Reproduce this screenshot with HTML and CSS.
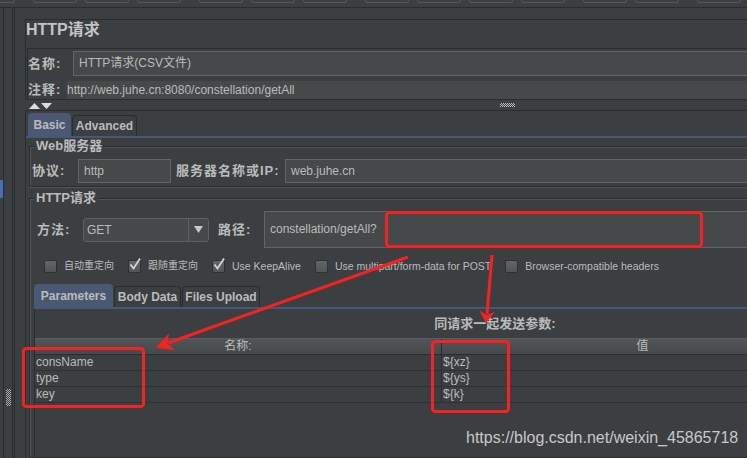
FILE: index.html
```html
<!DOCTYPE html>
<html lang="zh-CN">
<head>
<meta charset="utf-8">
<title>HTTP请求</title>
<link rel="stylesheet" href="styles.css">
</head>
<body>
<div class="toolbar">
  <span class="tb first"></span>
  <span class="tb g"></span><span class="tb"></span><span class="tb"></span>
  <span class="tb g"></span><span class="tb"></span><span class="tb"></span>
  <span class="tb g"></span><span class="tb"></span><span class="tb"></span><span class="tb"></span>
  <span class="tb g"></span><span class="tb"></span>
  <span class="tb g"></span>
</div>
<div class="workspace">
  <div class="tree">
    <div class="tree-strip"><div class="tree-sel"></div></div>
    <div class="tree-rest"><div class="grip"></div></div>
  </div>
  <div class="main">
    <div class="hdr">
      <div class="hdr-title">HTTP请求</div>
      <div class="hdr-sub">
        <div class="frow name-row">
          <span class="lbl w-name">名称:</span>
          <div class="field">HTTP请求(CSV文件)</div>
        </div>
        <div class="frow note-row">
          <span class="lbl w-note">注释:</span>
          <div class="note">http://web.juhe.cn:8080/constellation/getAll</div>
        </div>
      </div>
    </div>
    <div class="split">
      <svg class="updown" width="24" height="7" viewBox="0 0 24 7"><path d="M0 7 L5.5 1 L11 7Z M12 1 L23 1 L17.5 7Z" fill="#dcdcdc"/></svg>
      <span class="sgrip"></span>
    </div>
    <div class="tp">
      <div class="tabs">
        <span class="tab sel w-basic">Basic</span>
        <span class="tab w-adv">Advanced</span>
      </div>
      <div class="tpc">
        <div class="grp web">
          <div class="grp-title">Web服务器</div>
          <div class="srv-row">
            <span class="lbl w-proto">协议:</span>
            <div class="field proto">http</div>
            <span class="lbl w-host">服务器名称或IP:</span>
            <div class="field host">web.juhe.cn</div>
          </div>
        </div>
        <div class="grp req">
          <div class="grp-title">HTTP请求</div>
          <div class="req-row">
            <span class="lbl w-method">方法:</span>
            <div class="combo">
              <span class="combo-text">GET</span>
              <span class="combo-btn"><svg width="9" height="7" viewBox="0 0 9 7"><path d="M0 0 L9 0 L4.5 7Z" fill="#c8c8c8"/></svg></span>
            </div>
            <span class="lbl w-path">路径:</span>
            <div class="field path">constellation/getAll?</div>
          </div>
          <div class="cb-row">
            <span class="cb"><span class="box"></span><span class="cbl cjk">自动重定向</span></span>
            <span class="cb"><span class="box"><svg class="chk" width="13" height="13" viewBox="0 0 13 13"><polyline points="2.5,6.5 5.5,10.5 12,0.5" fill="none" stroke="#d2d2d2" stroke-width="1.8"/></svg></span><span class="cbl cjk">跟随重定向</span></span>
            <span class="cb"><span class="box"><svg class="chk" width="13" height="13" viewBox="0 0 13 13"><polyline points="2.5,6.5 5.5,10.5 12,0.5" fill="none" stroke="#d2d2d2" stroke-width="1.8"/></svg></span><span class="cbl">Use KeepAlive</span></span>
            <span class="cb"><span class="box"></span><span class="cbl">Use multipart/form-data for POST</span></span>
            <span class="cb"><span class="box"></span><span class="cbl">Browser-compatible headers</span></span>
          </div>
          <div class="stp">
            <div class="tabs stabs">
              <span class="tab sel w-par">Parameters</span>
              <span class="tab w-body">Body Data</span>
              <span class="tab w-files">Files Upload</span>
            </div>
            <div class="ppanel">
              <div class="plabel">同请求一起发送参数:</div>
              <div class="ptable">
                <div class="thead"><span class="c1">名称:</span><span class="c2">值</span></div>
                <div class="trow"><span class="c1">consName</span><span class="c2">${xz}</span></div>
                <div class="trow"><span class="c1">type</span><span class="c2">${ys}</span></div>
                <div class="trow"><span class="c1">key</span><span class="c2">${k}</span></div>
              </div>
            </div>
          </div>
        </div>
      </div>
    </div>
  </div>
</div>
<svg class="annot" width="747" height="458" viewBox="0 0 747 458">
  <g fill="none" stroke="#f42222" stroke-width="3">
    <rect x="386.5" y="212.5" width="315" height="34" rx="3"/>
    <rect x="23.5" y="348.5" width="120" height="58" rx="3"/>
    <rect x="432.5" y="341.5" width="76" height="70" rx="3"/>
    <line x1="408" y1="257" x2="168" y2="343"/>
    <line x1="492" y1="255" x2="487" y2="314"/>
  </g>
  <g fill="#f42222">
    <polygon points="156,347.5 169,333.3 167.3,343.4 175,350.3"/>
    <polygon points="486,323 479.1,310.3 486.7,315 495,311.8"/>
  </g>
</svg>
<div class="wm">https://blog.csdn.net/weixin_45865718</div>
</body>
</html>
```
FILE: styles.css
```css
* { box-sizing: border-box; }
html, body { margin: 0; padding: 0; }
body {
  width: 747px; height: 458px; overflow: hidden; position: relative;
  background: #3c3f41; color: #bbbbbb;
  font-family: "Liberation Sans", "Noto Sans CJK SC", sans-serif;
  font-size: 12px; line-height: 1.2;
}
.toolbar { display: flex; height: 8px; border-bottom: 1px solid #2a2c2d; }
.tb { flex: none; width: 44px; height: 3px; margin-left: 8px; border: 1px solid #55585a; border-top: 0; border-radius: 0 0 4px 4px; }
.tb.first { width: 15px; margin-left: 0; border-left: 0; border-radius: 0 0 4px 0; }
.tb.g { margin-left: 18px; }

.workspace { display: flex; height: 450px; }
.tree { flex: none; width: 13px; display: flex; border-right: 1px solid #2a2c2d; }
.tree-strip { width: 4px; border-right: 1px solid #2a2c2d; }
.tree-sel { margin-top: 172px; height: 18px; background: #4b6eaf; }
.tree-rest { flex: 1; display: flex; justify-content: center; }
.grip {
  margin-top: 381px; width: 5px; height: 17px;
  background: conic-gradient(#a8a8a8 25%, transparent 0 50%, #a8a8a8 0 75%, transparent 0) 0 0 / 2px 2px;
}

.main {
  flex: 1; min-width: 0; margin-left: 1px; border-left: 1px solid #2a2c2d;
  padding: 11px 0 0 10px; overflow: hidden; display: flex; flex-direction: column;
}
.hdr { flex: none; margin-right: -20px; border-top: 1px solid #2a2c2d; border-left: 1px solid #2a2c2d; }
.hdr-title { height: 28px; font-size: 16px; font-weight: bold; line-height: 20px; color: #c4c4c4; }
.hdr-sub { margin-left: 1px; border: 1px solid #2a2c2d; border-right: 0; padding-top: 2px; }
.frow { display: flex; align-items: center; }
.name-row { height: 25px; }
.note-row { height: 18px; margin-top: 5px; }
.lbl { flex: none; font-weight: bold; font-size: 13px; letter-spacing: 1px; white-space: nowrap; }
.w-name { width: 45px; }
.w-note { width: 39px; }
.w-proto { width: 46px; }
.w-host { width: 109px; margin-left: 5px; }
.w-method { width: 46px; }
.w-path { width: 46px; margin-left: 9px; }
.field {
  flex: 1; min-width: 0; height: 25px; background: #45494a; border: 1px solid #646464;
  padding-left: 5px; line-height: 23px; white-space: nowrap;
}
.note { flex: 1; height: 18px; background: #45494a; line-height: 18px; white-space: nowrap; }

.split { flex: none; height: 11px; border-bottom: 1px solid #2a2c2d; display: flex; align-items: center; padding-left: 4px; }
.updown { display: block; }
.sgrip {
  margin-left: 447px; width: 15px; height: 4px;
  background: conic-gradient(#bdbdbd 25%, transparent 0 50%, #bdbdbd 0 75%, transparent 0) 0 0 / 2px 2px;
}

.tp { flex: 1; display: flex; flex-direction: column; margin-right: -20px; border-left: 1px solid #2a2c2d; padding-top: 2px; }
.tabs { flex: none; display: flex; align-items: flex-end; gap: 1px; padding-left: 2px; border-bottom: 2px solid #46577a; }
.tab {
  flex: none; height: 21px; line-height: 20px; text-align: center; font-weight: bold;
  border: 1px solid #2a2c2d; border-bottom: 0; border-radius: 4px 4px 0 0; white-space: nowrap;
}
.tab.sel { height: 23px; line-height: 22px; background: #4a5874; border-color: #4a5874; }
.w-basic { width: 43px; }
.w-adv { width: 65px; }
.w-par { width: 79px; }
.w-body { width: 67px; }
.w-files { width: 78px; }

.tpc { flex: 1; display: flex; flex-direction: column; padding-left: 3px; }
.grp {
  flex: none; display: flex; flex-direction: column;
  border: 1px solid #2a2c2d; border-right: 0;
  box-shadow: inset 1px 1px 0 #515557, 0 1px 0 #515557;
}
.grp.web { margin-top: 8px; padding-bottom: 3px; }
.grp.req { flex: 1; margin-top: 11px; }
.grp-title {
  align-self: flex-start; margin: -8px 0 0 4px; padding: 0 2px; background: #3c3f41;
  font-weight: bold; font-size: 13px; line-height: 14px; white-space: nowrap;
}
.srv-row { display: flex; align-items: center; height: 24px; margin-top: 6px; padding-left: 2px; }
.field.proto { flex: none; width: 93px; height: 24px; line-height: 22px; }
.field.host { height: 24px; line-height: 22px; }

.req-row { display: flex; align-items: center; height: 37px; margin-top: 6px; padding-left: 7px; }
.combo {
  flex: none; display: flex; width: 126px; height: 24px; background: #45494a;
  border: 1px solid #5e6162; border-radius: 3px;
}
.combo-text { flex: 1; padding-left: 3px; line-height: 22px; }
.combo-btn { width: 20px; border-left: 1px solid #5e6162; display: flex; align-items: center; justify-content: center; }
.combo-btn svg { display: block; }
.field.path { height: 37px; line-height: 35px; }

.cb-row { flex: none; display: flex; align-items: center; height: 14px; margin-top: 11px; padding-left: 14px; }
.cb { display: flex; align-items: center; margin-right: 14px; white-space: nowrap; }
.box {
  flex: none; position: relative; width: 13px; height: 13px; margin-right: 7px;
  border: 1px solid #2e3032; border-radius: 2px; background: linear-gradient(#636668, #525557);
}
.chk { position: absolute; left: -1px; top: -3px; overflow: visible; }
.cbl { font-size: 10.5px; }
.cbl.cjk { font-size: 10px; }

.stp { flex: 1; display: flex; flex-direction: column; margin-top: 11px; padding-left: 4px; }
.stabs { padding-left: 0; }
.ppanel { flex: 1; border-left: 1px solid #2a2c2d; }
.plabel { width: 920px; height: 29px; line-height: 29px; text-align: center; font-weight: bold; font-size: 13px; }
.ptable { width: 808px; }
.thead {
  display: flex; height: 17px; border-top: 1px solid #5a5d5f; border-bottom: 1px solid #2a2c2d;
  background: linear-gradient(#525557, #46494b);
}
.thead span { line-height: 15px; text-align: center; }
.c1 { flex: none; width: 407px; border-right: 1px solid #2a2c2d; }
.c2 { flex: none; width: 401px; }
.trow { display: flex; height: 16px; border-bottom: 1px solid #2f3234; }
.trow span { line-height: 15px; padding-left: 1px; }

.annot { position: absolute; left: 0; top: 0; pointer-events: none; }
.wm {
  position: absolute; left: 466px; top: 429px; font-size: 16px; line-height: 18px;
  color: rgba(232, 232, 232, 0.82); white-space: nowrap;
}
```
